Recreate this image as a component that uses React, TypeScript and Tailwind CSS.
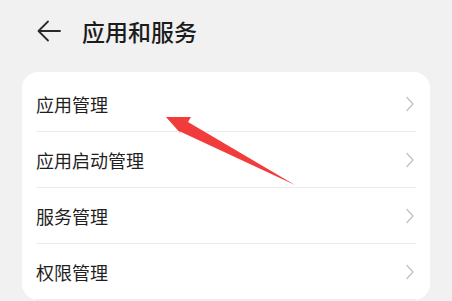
const items = ["应用管理", "应用启动管理", "服务管理", "权限管理"];

function Chevron() {
  return (
    <svg width="10" height="16" viewBox="0 0 10 16" fill="none">
      <path d="M2 1.5 L8 8 L2 14.5" stroke="#c6c6c6" strokeWidth="1.6" strokeLinecap="round" strokeLinejoin="round" />
    </svg>
  );
}

export default function App() {
  return (
    <div
      className="relative w-[452px] h-[301px] overflow-hidden bg-[#f1f1f1]"
      style={{ fontFamily: '"Noto Sans CJK SC", "Noto Sans", sans-serif' }}
    >
      {/* header */}
      <div className="h-[62px] flex items-center pl-[37px]">
        <svg width="24" height="22" viewBox="0 0 24 22" fill="none">
          <path d="M23 11 H2 M11 1.5 L1.5 11 L11 20.5" stroke="#2a2a2a" strokeWidth="1.8" strokeLinecap="round" strokeLinejoin="round" />
        </svg>
        <span className="ml-[21px] text-[23px] leading-none text-[#1c1c1c] font-medium">应用和服务</span>
      </div>

      {/* list card */}
      <div className="mt-[10px] mx-[22px] rounded-[16px] bg-white pt-[4px] px-[14px]">
        {items.map((label) => (
          <div key={label} className="h-[56px] flex items-center justify-between border-b border-[#ebebeb]">
            <span className="text-[18px] leading-none text-[#1f1f1f]">{label}</span>
            <div className="pr-[1px]">
              <Chevron />
            </div>
          </div>
        ))}
      </div>

      {/* red annotation arrow */}
      <svg className="absolute left-0 top-0 pointer-events-none" width="452" height="301" viewBox="0 0 452 301">
        <polygon
          points="166,117 191,117 188,122 295,185 179,131 182,135"
          fill="#f23b3b"
        />
      </svg>
    </div>
  );
}
